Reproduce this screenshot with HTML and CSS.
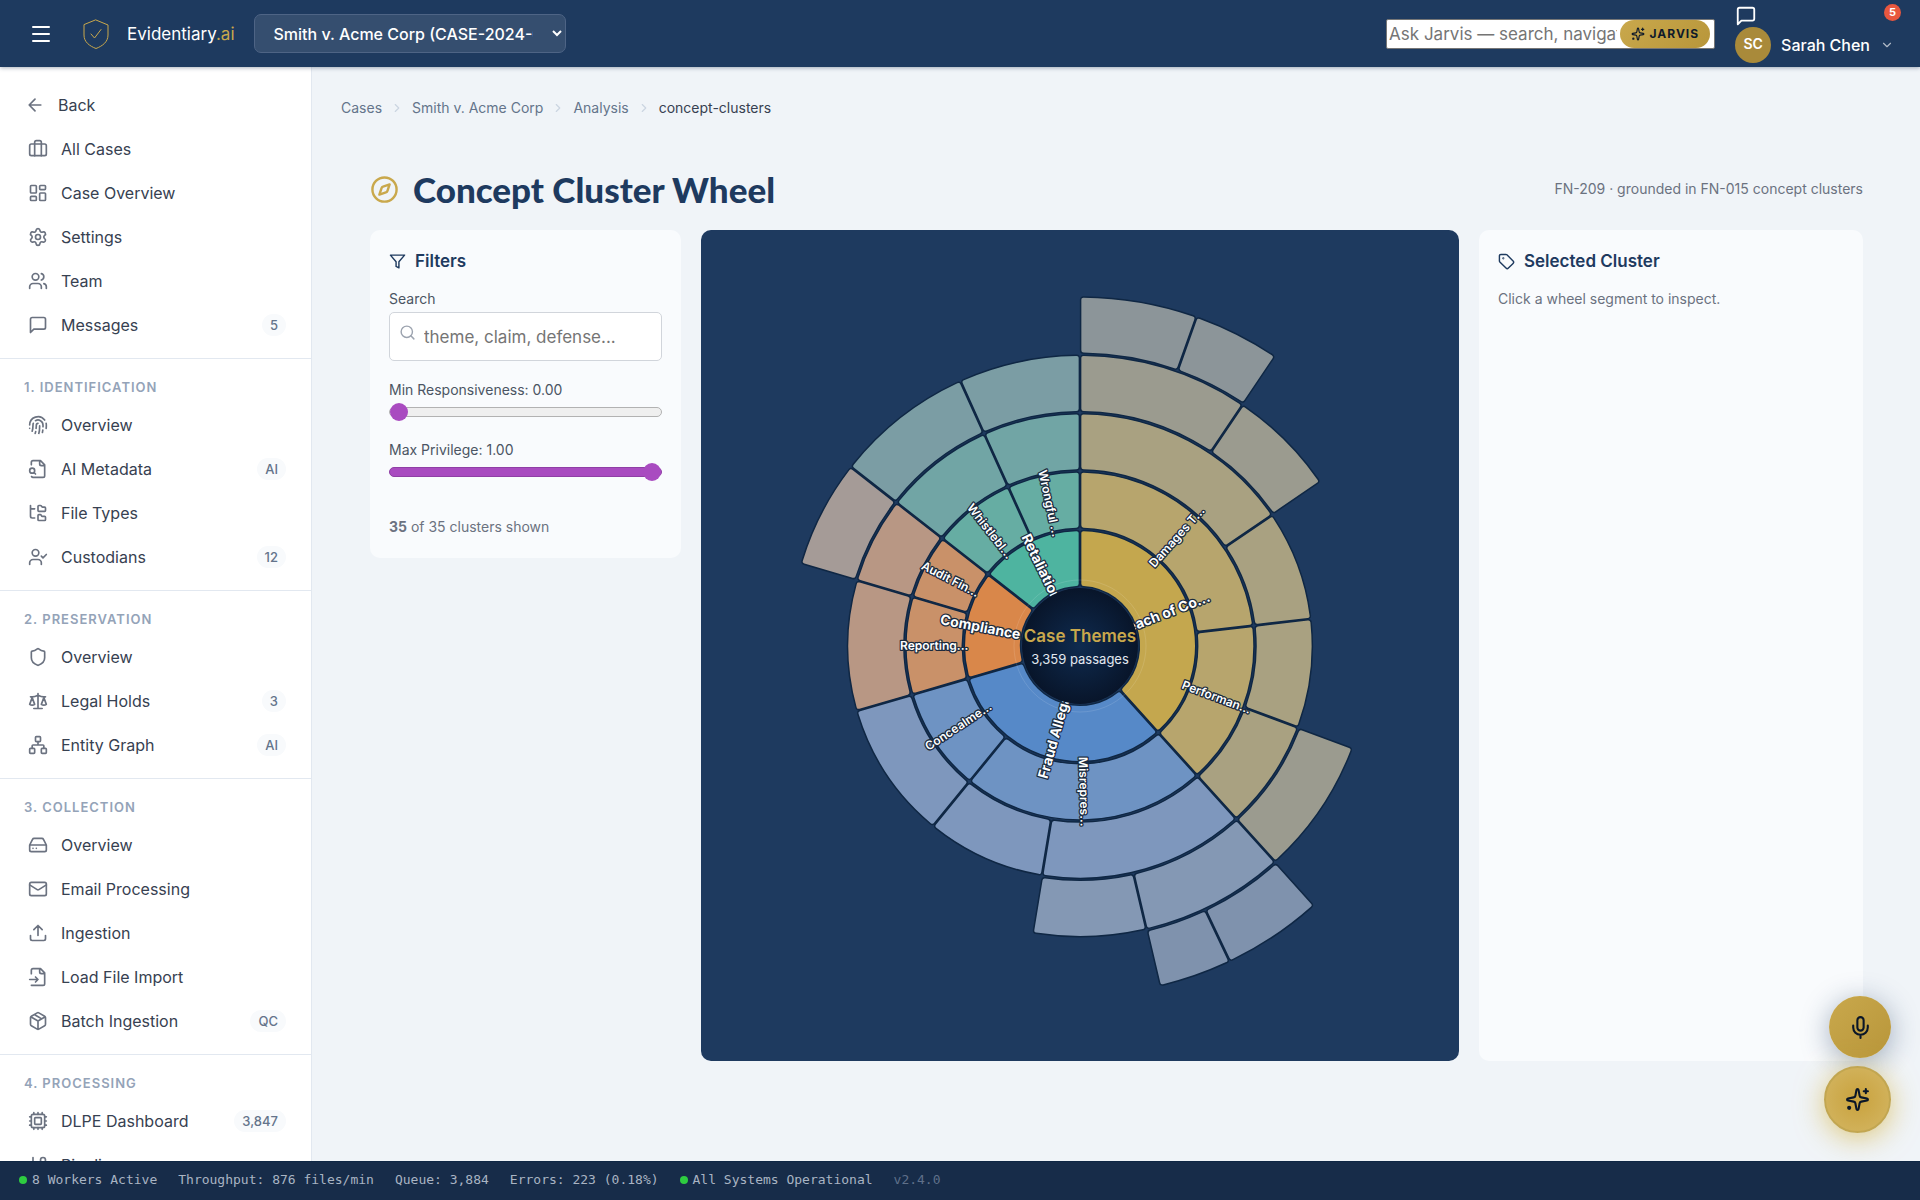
FILE: index.html
```html
<!DOCTYPE html>
<html lang="en">
<head>
<meta charset="utf-8">
<meta name="viewport" content="width=device-width, initial-scale=1">
<title>Concept Cluster Wheel · Evidentiary.ai</title>
<link rel="stylesheet" href="styles.css">
</head>
<body>
<svg class="sprite" aria-hidden="true">
  <symbol id="i-menu" viewBox="0 0 24 24"><path d="M4 5h16M4 12h16M4 19h16"/></symbol>
  <symbol id="i-shield" viewBox="0 0 24 24"><path d="M20 13c0 5-3.500 7.500-7.660 8.950a1 1 0 0 1-.67-.01C7.500 20.500 4 18 4 13V6a1 1 0 0 1 1-1c2 0 4.500-1.200 6.240-2.720a1.170 1.170 0 0 1 1.520 0C14.510 3.810 17 5 19 5a1 1 0 0 1 1 1z"/></symbol>
  <symbol id="i-logo" viewBox="0 0 32 32"><path d="M16 2 28 7v10c0 7-5.500 11-12 13.500C9.500 28 4 24 4 17V7z"/><path d="m11 16 3.500 4L21 11.500"/></symbol>
  <symbol id="i-back" viewBox="0 0 24 24"><path d="m12 19-7-7 7-7M19 12H5"/></symbol>
  <symbol id="i-cases" viewBox="0 0 24 24"><path d="M16 20V4a2 2 0 0 0-2-2h-4a2 2 0 0 0-2 2v16"/><rect width="20" height="14" x="2" y="6" rx="2"/></symbol>
  <symbol id="i-dashboard" viewBox="0 0 24 24"><rect width="7" height="9" x="3" y="3" rx="1"/><rect width="7" height="5" x="14" y="3" rx="1"/><rect width="7" height="9" x="14" y="12" rx="1"/><rect width="7" height="5" x="3" y="16" rx="1"/></symbol>
  <symbol id="i-settings" viewBox="0 0 24 24"><path d="M9.671 4.136a2.340 2.340 0 0 1 4.659 0 2.340 2.340 0 0 0 3.319 1.915 2.340 2.340 0 0 1 2.330 4.033 2.340 2.340 0 0 0 0 3.831 2.340 2.340 0 0 1-2.330 4.033 2.340 2.340 0 0 0-3.319 1.915 2.340 2.340 0 0 1-4.659 0 2.340 2.340 0 0 0-3.320-1.915 2.340 2.340 0 0 1-2.330-4.033 2.340 2.340 0 0 0 0-3.831A2.340 2.340 0 0 1 6.350 6.051a2.340 2.340 0 0 0 3.319-1.915"/><circle cx="12" cy="12" r="3"/></symbol>
  <symbol id="i-users" viewBox="0 0 24 24"><path d="M16 21v-2a4 4 0 0 0-4-4H6a4 4 0 0 0-4 4v2M16 3.128a4 4 0 0 1 0 7.744M22 21v-2a4 4 0 0 0-3-3.870"/><circle cx="9" cy="7" r="4"/></symbol>
  <symbol id="i-message" viewBox="0 0 24 24"><path d="M21 15a2 2 0 0 1-2 2H7l-4 4V5a2 2 0 0 1 2-2h14a2 2 0 0 1 2 2z"/></symbol>
  <symbol id="i-fingerprint" viewBox="0 0 24 24"><path d="M12 10a2 2 0 0 0-2 2c0 1.020-.1 2.510-.26 4M14 13.120c0 2.380 0 6.380-1 8.880M17.290 21.020c.12-.6.430-2.300.5-3.020M2 12a10 10 0 0 1 18-6M2 16h.01M21.800 16c.2-2 .131-5.354 0-6M5 19.500C5.500 18 6 15 6 12a6 6 0 0 1 .34-2M8.650 22c.21-.66.450-1.320.570-2M9 6.800a6 6 0 0 1 9 5.200v2"/></symbol>
  <symbol id="i-filesearch" viewBox="0 0 24 24"><path d="M14 2v4a2 2 0 0 0 2 2h4M4.268 21a2 2 0 0 0 1.727 1H18a2 2 0 0 0 2-2V7l-5-5H6a2 2 0 0 0-2 2v3M9 18l-1.500-1.500"/><circle cx="5" cy="14" r="3"/></symbol>
  <symbol id="i-tree" viewBox="0 0 24 24"><path d="M20 10a1 1 0 0 0 1-1V6a1 1 0 0 0-1-1h-2.500a1 1 0 0 1-.8-.4l-.9-1.200A1 1 0 0 0 15 3h-2a1 1 0 0 0-1 1v5a1 1 0 0 0 1 1ZM20 21a1 1 0 0 0 1-1v-3a1 1 0 0 0-1-1h-2.900a1 1 0 0 1-.88-.55l-.42-.85a1 1 0 0 0-.92-.6H13a1 1 0 0 0-1 1v5a1 1 0 0 0 1 1ZM3 5a2 2 0 0 0 2 2h3M3 3v13a2 2 0 0 0 2 2h3"/></symbol>
  <symbol id="i-usercheck" viewBox="0 0 24 24"><path d="m16 11 2 2 4-4M16 21v-2a4 4 0 0 0-4-4H6a4 4 0 0 0-4 4v2"/><circle cx="9" cy="7" r="4"/></symbol>
  <symbol id="i-scale" viewBox="0 0 24 24"><path d="m16 16 3-8 3 8c-.87.650-1.920 1-3 1s-2.130-.35-3-1ZM2 16l3-8 3 8c-.87.650-1.920 1-3 1s-2.130-.35-3-1ZM7 21h10M12 3v18M3 7h2c2 0 5-1 7-2 2 1 5 2 7 2h2"/></symbol>
  <symbol id="i-network" viewBox="0 0 24 24"><rect x="16" y="16" width="6" height="6" rx="1"/><rect x="2" y="16" width="6" height="6" rx="1"/><rect x="9" y="2" width="6" height="6" rx="1"/><path d="M5 16v-3a1 1 0 0 1 1-1h12a1 1 0 0 1 1 1v3M12 12V8"/></symbol>
  <symbol id="i-drive" viewBox="0 0 24 24"><path d="M22 12H2M5.450 5.110 2 12v6a2 2 0 0 0 2 2h16a2 2 0 0 0 2-2v-6l-3.450-6.890A2 2 0 0 0 16.760 4H7.240a2 2 0 0 0-1.790 1.110zM6 16h.01M10 16h.01"/></symbol>
  <symbol id="i-mail" viewBox="0 0 24 24"><path d="m22 7-8.991 5.727a2 2 0 0 1-2.009 0L2 7"/><rect x="2" y="4" width="20" height="16" rx="2"/></symbol>
  <symbol id="i-upload" viewBox="0 0 24 24"><path d="M12 3v12M17 8l-5-5-5 5M21 15v4a2 2 0 0 1-2 2H5a2 2 0 0 1-2-2v-4"/></symbol>
  <symbol id="i-fileinput" viewBox="0 0 24 24"><path d="M4 22h14a2 2 0 0 0 2-2V7l-5-5H6a2 2 0 0 0-2 2v4M14 2v4a2 2 0 0 0 2 2h4M2 15h10M9 18l3-3-3-3"/></symbol>
  <symbol id="i-package" viewBox="0 0 24 24"><path d="M11 21.730a2 2 0 0 0 2 0l7-4A2 2 0 0 0 21 16V8a2 2 0 0 0-1-1.730l-7-4a2 2 0 0 0-2 0l-7 4A2 2 0 0 0 3 8v8a2 2 0 0 0 1 1.730zM12 22V12M3.290 7 12 12l8.710-5M7.500 4.270l9 5.150"/></symbol>
  <symbol id="i-cpu" viewBox="0 0 24 24"><path d="M12 20v2M12 2v2M17 20v2M17 2v2M2 12h2M2 17h2M2 7h2M20 12h2M20 17h2M20 7h2M7 20v2M7 2v2"/><rect x="4" y="4" width="16" height="16" rx="2"/><rect x="8" y="8" width="8" height="8" rx="1"/></symbol>
  <symbol id="i-branch" viewBox="0 0 24 24"><path d="M6 3v12M18 9a9 9 0 0 1-9 9"/><circle cx="18" cy="6" r="3"/><circle cx="6" cy="18" r="3"/></symbol>
  <symbol id="i-chevron-down" viewBox="0 0 24 24"><path d="m6 9 6 6 6-6"/></symbol>
  <symbol id="i-chevron-right" viewBox="0 0 24 24"><path d="m9 18 6-6-6-6"/></symbol>
  <symbol id="i-compass" viewBox="0 0 24 24"><path d="m16.240 7.760-1.804 5.411a2 2 0 0 1-1.265 1.265L7.760 16.240l1.804-5.411a2 2 0 0 1 1.265-1.265z"/><circle cx="12" cy="12" r="10"/></symbol>
  <symbol id="i-filter" viewBox="0 0 24 24"><path d="M22 3H2l8 9.460V19l4 2v-8.540z"/></symbol>
  <symbol id="i-search" viewBox="0 0 24 24"><circle cx="11" cy="11" r="8"/><path d="m21 21-4.300-4.300"/></symbol>
  <symbol id="i-tag" viewBox="0 0 24 24"><path d="M12.586 2.586A2 2 0 0 0 11.172 2H4a2 2 0 0 0-2 2v7.172a2 2 0 0 0 .586 1.414l8.704 8.704a2.426 2.426 0 0 0 3.420 0l6.580-6.580a2.426 2.426 0 0 0 0-3.420z"/><circle cx="7.500" cy="7.500" r=".5"/></symbol>
  <symbol id="i-sparkles" viewBox="0 0 24 24"><path d="M11.017 2.814a1 1 0 0 1 1.966 0l1.051 5.558a2 2 0 0 0 1.594 1.594l5.558 1.051a1 1 0 0 1 0 1.966l-5.558 1.051a2 2 0 0 0-1.594 1.594l-1.051 5.558a1 1 0 0 1-1.966 0l-1.051-5.558a2 2 0 0 0-1.594-1.594l-5.558-1.051a1 1 0 0 1 0-1.966l5.558-1.051a2 2 0 0 0 1.594-1.594zM20 2v4M22 4h-4"/><circle cx="4" cy="20" r="1"/></symbol>
  <symbol id="i-mic" viewBox="0 0 24 24"><path d="M12 19v3M19 10v2a7 7 0 0 1-14 0v-2"/><rect x="9" y="2" width="6" height="13" rx="3"/></symbol>
</svg>

<header class="topbar">
  <button class="icon-btn" aria-label="Toggle menu"><svg class="icon icon-lg"><use href="#i-menu"/></svg></button>
  <a class="brand" href="#"><svg class="logo"><use href="#i-logo"/></svg><span>Evidentiary<span class="brand-tld">.ai</span></span></a>
  <select class="case-select" aria-label="Case"><option>Smith v. Acme Corp (CASE-2024-001)</option></select>
  <form class="ask">
    <input type="text" aria-label="Ask Jarvis" placeholder="Ask Jarvis — search, navigate, analyze">
    <button type="button" class="jarvis"><svg class="icon icon-xs"><use href="#i-sparkles"/></svg>JARVIS</button>
  </form>
  <div class="account">
    <button class="icon-btn" aria-label="Messages"><svg class="icon icon-md"><use href="#i-message"/></svg></button>
    <span class="alert-count">5</span>
    <button class="user"><span class="avatar">SC</span><span>Sarah Chen</span><svg class="icon icon-xs"><use href="#i-chevron-down"/></svg></button>
  </div>
</header>

<div class="workspace">
  <nav class="sidebar" aria-label="Case navigation">
    <div class="nav-group">
      <a class="nav-item nav-back" href="#"><svg class="icon"><use href="#i-back"/></svg>Back</a>
      <a class="nav-item" href="#"><svg class="icon"><use href="#i-cases"/></svg>All Cases</a>
      <a class="nav-item" href="#"><svg class="icon"><use href="#i-dashboard"/></svg>Case Overview</a>
      <a class="nav-item" href="#"><svg class="icon"><use href="#i-settings"/></svg>Settings</a>
      <a class="nav-item" href="#"><svg class="icon"><use href="#i-users"/></svg>Team</a>
      <a class="nav-item" href="#"><svg class="icon"><use href="#i-message"/></svg>Messages<span class="badge">5</span></a>
    </div>
    <div class="nav-group">
      <h2 class="nav-title">1. IDENTIFICATION</h2>
      <a class="nav-item" href="#"><svg class="icon"><use href="#i-fingerprint"/></svg>Overview</a>
      <a class="nav-item" href="#"><svg class="icon"><use href="#i-filesearch"/></svg>AI Metadata<span class="badge">AI</span></a>
      <a class="nav-item" href="#"><svg class="icon"><use href="#i-tree"/></svg>File Types</a>
      <a class="nav-item" href="#"><svg class="icon"><use href="#i-usercheck"/></svg>Custodians<span class="badge">12</span></a>
    </div>
    <div class="nav-group">
      <h2 class="nav-title">2. PRESERVATION</h2>
      <a class="nav-item" href="#"><svg class="icon"><use href="#i-shield"/></svg>Overview</a>
      <a class="nav-item" href="#"><svg class="icon"><use href="#i-scale"/></svg>Legal Holds<span class="badge">3</span></a>
      <a class="nav-item" href="#"><svg class="icon"><use href="#i-network"/></svg>Entity Graph<span class="badge">AI</span></a>
    </div>
    <div class="nav-group">
      <h2 class="nav-title">3. COLLECTION</h2>
      <a class="nav-item" href="#"><svg class="icon"><use href="#i-drive"/></svg>Overview</a>
      <a class="nav-item" href="#"><svg class="icon"><use href="#i-mail"/></svg>Email Processing</a>
      <a class="nav-item" href="#"><svg class="icon"><use href="#i-upload"/></svg>Ingestion</a>
      <a class="nav-item" href="#"><svg class="icon"><use href="#i-fileinput"/></svg>Load File Import</a>
      <a class="nav-item" href="#"><svg class="icon"><use href="#i-package"/></svg>Batch Ingestion<span class="badge">QC</span></a>
    </div>
    <div class="nav-group">
      <h2 class="nav-title">4. PROCESSING</h2>
      <a class="nav-item" href="#"><svg class="icon"><use href="#i-cpu"/></svg>DLPE Dashboard<span class="badge">3,847</span></a>
      <a class="nav-item" href="#"><svg class="icon"><use href="#i-branch"/></svg>Pipeline</a>
    </div>
  </nav>

  <main class="main">
    <nav class="crumbs" aria-label="Breadcrumb">
      <a href="#">Cases</a><svg class="icon icon-xs"><use href="#i-chevron-right"/></svg>
      <a href="#">Smith v. Acme Corp</a><svg class="icon icon-xs"><use href="#i-chevron-right"/></svg>
      <a href="#">Analysis</a><svg class="icon icon-xs"><use href="#i-chevron-right"/></svg>
      <span class="current">concept-clusters</span>
    </nav>
    <div class="page">
      <div class="page-head">
        <svg class="icon compass"><use href="#i-compass"/></svg>
        <h1>Concept Cluster Wheel</h1>
        <p class="note">FN-209 · grounded in FN-015 concept clusters</p>
      </div>
      <div class="columns">
        <section class="card filters">
          <h2 class="card-title"><svg class="icon icon-sm"><use href="#i-filter"/></svg>Filters</h2>
          <div class="field">
            <label for="q">Search</label>
            <div class="search"><svg class="icon icon-sm"><use href="#i-search"/></svg><input id="q" type="text" placeholder="theme, claim, defense..."></div>
          </div>
          <div class="field">
            <label for="resp">Min Responsiveness: 0.00</label>
            <input class="slider" id="resp" type="range" min="0" max="1" step="0.05" value="0">
          </div>
          <div class="field">
            <label for="priv">Max Privilege: 1.00</label>
            <input class="slider slider-full" id="priv" type="range" min="0" max="1" step="0.05" value="1">
          </div>
          <p class="shown"><strong>35</strong> of 35 clusters shown</p>
        </section>
        <section class="wheel-panel" aria-label="Concept cluster wheel">
          <svg class="wheel" viewBox="-379 -416 758 831">
            <defs><radialGradient id="hub"><stop offset="0" stop-color="#0f2b4f"/><stop offset="1" stop-color="#08152a"/></radialGradient></defs>
            <g id="segments"></g>
            <circle class="hub-ring" r="66"/>
            <g id="labels"></g>
            <circle class="hub" r="58"/>
            <text class="hub-title" y="-4">Case Themes</text>
            <text class="hub-sub" y="18">3,359 passages</text>
          </svg>
        </section>
        <section class="card selected">
          <h2 class="card-title"><svg class="icon icon-sm"><use href="#i-tag"/></svg>Selected Cluster</h2>
          <p class="hint">Click a wheel segment to inspect.</p>
        </section>
      </div>
    </div>
  </main>
</div>

<div class="fabs">
  <button class="fab" aria-label="Voice input"><svg class="icon"><use href="#i-mic"/></svg></button>
  <button class="fab fab-assist" aria-label="Open assistant"><svg class="icon"><use href="#i-sparkles"/></svg></button>
</div>

<footer class="statusbar">
  <span><i class="dot"></i>8 Workers Active</span>
  <span>Throughput: 876 files/min</span>
  <span>Queue: 3,884</span>
  <span>Errors: 223 (0.18%)</span>
  <span><i class="dot"></i>All Systems Operational</span>
  <span class="version">v2.4.0</span>
</footer>
<script src="wheel.js"></script>
</body>
</html>
```
FILE: wheel.js
```js
// Sunburst of case themes: [theme, ring, start angle, end angle, label], angles clockwise from noon.
const RING = 350 / 6;
const COLORS = {
  gold: ['#c4a74e', '#b7a56d', '#a9a181', '#9b9b8f', '#8c9599'],
  blue: ['#5689c8', '#6e93c3', '#7e97bd', '#8498b4', '#7f92ad'],
  orange: ['#d9874a', '#c99169', '#b89784', '#a59b97'],
  teal: ['#4eb4a0', '#66ada3', '#71a5a5', '#7b9da4']
};
const SEGMENTS = [
  ['gold', 1, 0, 137.9, 'Breach of Co...'],
  ['blue', 1, 137.9, 253.8, 'Fraud Allega...'],
  ['orange', 1, 253.8, 308, 'Compliance A...'],
  ['teal', 1, 308, 360, 'Retaliation'],
  ['gold', 2, 0, 83.3, 'Damages T...'],
  ['gold', 2, 83.3, 137.9, 'Performan...'],
  ['blue', 2, 137.9, 219.2, 'Misrepres...'],
  ['blue', 2, 219.2, 253.8, 'Concealme...'],
  ['orange', 2, 253.8, 286.4, 'Reporting...'],
  ['orange', 2, 286.4, 308, 'Audit Fin...'],
  ['teal', 2, 308, 335.7, 'Whistlebl...'],
  ['teal', 2, 335.7, 360, 'Wrongful ...'],
  ['gold', 3, 0, 55.7],
  ['gold', 3, 55.7, 83.3],
  ['gold', 3, 83.3, 110.5],
  ['gold', 3, 110.5, 137.9],
  ['blue', 3, 137.9, 189.4],
  ['blue', 3, 189.4, 219.2],
  ['blue', 3, 219.2, 253.8],
  ['orange', 3, 253.8, 286.4],
  ['orange', 3, 286.4, 308],
  ['teal', 3, 308, 335.7],
  ['teal', 3, 335.7, 360],
  ['gold', 4, 0, 34],
  ['gold', 4, 34, 55.7],
  ['gold', 4, 110.5, 137.9],
  ['blue', 4, 137.9, 166.8],
  ['blue', 4, 166.8, 189.4],
  ['orange', 4, 286.4, 308],
  ['teal', 4, 308, 335.7],
  ['teal', 4, 335.7, 360],
  ['gold', 5, 0, 19.5],
  ['gold', 5, 19.5, 34],
  ['blue', 5, 137.9, 154.6],
  ['blue', 5, 154.6, 166.8]
];
const NS = 'http://www.w3.org/2000/svg';

// Point at radius r and angle a (degrees), moved sideways by s pixels.
function at(r, a, s) {
  const t = a * Math.PI / 180 + (s || 0) / r;
  return (r * Math.sin(t)).toFixed(2) + ' ' + (-r * Math.cos(t)).toFixed(2);
}

// Ring sector with a small gap on every side and rounded corners.
function sector(ring, a0, a1) {
  const g = 0.6, c = 3;
  const r0 = ring * RING + 1, r1 = (ring + 1) * RING - 1;
  const big = a1 - a0 > 180 ? 1 : 0;
  return `M${at(r0 + c, a0, g)}L${at(r1 - c, a0, g)}Q${at(r1, a0, g)} ${at(r1, a0, g + c)}` +
    `A${r1} ${r1} 0 ${big} 1 ${at(r1, a1, -g - c)}Q${at(r1, a1, -g)} ${at(r1 - c, a1, -g)}` +
    `L${at(r0 + c, a1, -g)}Q${at(r0, a1, -g)} ${at(r0, a1, -g - c)}` +
    `A${r0} ${r0} 0 ${big} 0 ${at(r0, a0, g + c)}Q${at(r0, a0, g)} ${at(r0 + c, a0, g)}Z`;
}

for (const [theme, ring, a0, a1, label] of SEGMENTS) {
  const path = document.createElementNS(NS, 'path');
  path.setAttribute('class', 'segment');
  path.setAttribute('d', sector(ring, a0, a1));
  path.setAttribute('fill', COLORS[theme][ring - 1]);
  document.getElementById('segments').append(path);
  if (label) {
    const mid = (a0 + a1) / 2;
    const text = document.createElementNS(NS, 'text');
    text.setAttribute('class', ring === 1 ? 'label label-theme' : 'label');
    text.setAttribute('transform', `translate(${at((ring + 0.5) * RING, mid)}) rotate(${mid < 180 ? mid - 90 : mid + 90})`);
    text.setAttribute('dy', ring === 1 ? '5' : '4');
    text.textContent = label;
    document.getElementById('labels').append(text);
  }
}
```
FILE: styles.css
```css
:root {
  --navy: #1e3a5f;
  --gold: #c9a84c;
  --line: #e2e8f0;
  --ink: #374151;
  --muted: #6b7280;
}
* { box-sizing: border-box; }
body {
  margin: 0;
  height: 100vh;
  display: flex;
  flex-direction: column;
  font: 16px/24px Inter, "Liberation Sans", sans-serif;
  color: var(--ink);
  background: #f0f4f8;
}
h1, h2, p { margin: 0; }
a { color: inherit; text-decoration: none; }
button, input, select { font: inherit; }
button { border: 0; background: none; padding: 0; color: inherit; }
.sprite { position: absolute; width: 0; height: 0; }
.icon, .logo {
  width: 20px;
  height: 20px;
  flex: none;
  display: block;
  fill: none;
  stroke: currentColor;
  stroke-width: 2;
  stroke-linecap: round;
  stroke-linejoin: round;
}
.icon-xs { width: 14px; height: 14px; }
.icon-sm { width: 17px; height: 17px; }
.icon-md { width: 22px; height: 22px; }
.icon-lg { width: 24px; height: 24px; }

/* Top bar */
.topbar {
  flex: none;
  height: 67px;
  display: flex;
  align-items: center;
  padding: 0 21px 0 29px;
  color: #fff;
  background: var(--navy);
  box-shadow: 0 1px 4px rgba(15, 35, 65, .35);
  z-index: 2;
}
.brand {
  display: flex;
  align-items: center;
  gap: 15px;
  margin-left: 27px;
  font-size: 17px;
}
.logo { width: 32px; height: 32px; stroke: var(--gold); stroke-width: 1; }
.brand-tld { color: var(--gold); }
.case-select {
  width: 312px;
  height: 39px;
  margin-left: 19px;
  padding: 0 16px 0 15px;
  border: 1px solid #4e6485;
  border-radius: 7px;
  font-weight: 500;
  color: #fff;
  background: #354e6f;
}
.ask {
  display: flex;
  width: 329px;
  height: 30px;
  margin-left: auto;
  padding-right: 4px;
  border: 1px solid #767676;
  border-radius: 2px;
  background: #fff;
}
.ask input { flex: 1; min-width: 0; border: 0; padding: 0 0 0 2px; background: none; font-size: 17px; }
input::placeholder { color: #757575; opacity: 1; }
.jarvis {
  display: flex;
  align-items: center;
  gap: 5px;
  margin-left: 3px;
  padding: 0 11px;
  border-radius: 15px;
  font-size: 12px;
  font-weight: 700;
  letter-spacing: 1px;
  color: #0f1a2a;
  background: linear-gradient(135deg, #c9a84c, #b8963a);
}
.account {
  position: relative;
  display: flex;
  flex-direction: column;
  align-items: flex-start;
  margin-left: 20px;
}
.alert-count {
  position: absolute;
  top: -1px;
  right: -2px;
  width: 17px;
  height: 17px;
  border-radius: 50%;
  font-size: 11px;
  line-height: 17px;
  font-weight: 700;
  text-align: center;
  background: #e8573f;
}
.user { display: flex; align-items: center; gap: 10px; padding-right: 5px; font-weight: 500; }
.user .icon { opacity: .65; }
.avatar {
  width: 36px;
  height: 36px;
  border-radius: 50%;
  font-size: 14px;
  line-height: 34px;
  font-weight: 600;
  text-align: center;
  background: #a98a3a;
}

/* Layout */
.workspace { flex: 1; min-height: 0; display: flex; }
.sidebar {
  flex: none;
  width: 312px;
  padding-top: 16px;
  overflow: hidden;
  border-right: 1px solid var(--line);
  background: #fff;
}
.nav-group { padding: 0 12px 11px; }
.nav-group + .nav-group { padding-top: 20px; border-top: 1px solid var(--line); }
.nav-title {
  padding-left: 12px;
  margin-bottom: 8px;
  font-size: 13px;
  line-height: 16px;
  font-weight: 600;
  letter-spacing: 1px;
  color: #94a3b8;
}
.nav-item {
  display: flex;
  align-items: center;
  gap: 13px;
  height: 44px;
  padding: 0 13px 0 16px;
}
.nav-item .icon { color: #6b7280; }
.nav-back { padding-left: 13px; }
.badge {
  margin-left: auto;
  padding: 0 8px;
  border-radius: 12px;
  font-size: 13px;
  line-height: 22px;
  font-weight: 500;
  color: #64748b;
  background: #f8fafc;
}
.main { flex: 1; min-width: 0; padding: 29px; }
.crumbs {
  display: flex;
  align-items: center;
  gap: 8px;
  font-size: 14px;
  color: #64748b;
}
.crumbs .icon { color: #cbd5e1; }
.crumbs .current { color: var(--ink); }
.page { padding: 48px 28px 0 29px; }
.page-head { display: flex; align-items: center; gap: 14px; height: 42px; margin-bottom: 20px; }
.compass { width: 29px; height: 29px; color: var(--gold); }
h1 {
  font: 900 35px/42px Lato, Inter, sans-serif;
  color: var(--navy);
}
.note { margin-left: auto; font-size: 14px; color: var(--muted); }
.columns { display: grid; grid-template-columns: 311px minmax(0, 1fr) 384px; gap: 20px; }
.card { padding: 19px; border-radius: 10px; background: #f9fbfd; }
.card-title {
  display: flex;
  align-items: center;
  gap: 9px;
  margin-bottom: 14px;
  font-size: 17px;
  font-weight: 600;
  color: var(--navy);
}
.filters { align-self: start; }
.field { margin-bottom: 17px; }
.field label { display: block; font-size: 14px; color: #4b5563; }
.search {
  display: flex;
  gap: 8px;
  height: 49px;
  margin: 1px 0 16px;
  padding: 0 9px;
  border: 1px solid #d1d5db;
  border-radius: 5px;
  background: #fff;
}
.search .icon { margin-top: 11px; color: #9ca3af; }
.search input { flex: 1; min-width: 0; border: 0; padding: 0; background: none; font-size: 17px; }
.slider {
  appearance: none;
  display: block;
  width: 100%;
  height: 18px;
  margin: 1px 0 0;
  background: none;
}
.slider::-webkit-slider-runnable-track {
  height: 10px;
  border: 1px solid #b2b2b2;
  border-radius: 5px;
  background: #efefef;
}
.slider-full::-webkit-slider-runnable-track { border-color: #8f3fa5; background: #a94bc0; }
.slider::-webkit-slider-thumb {
  appearance: none;
  width: 18px;
  height: 18px;
  margin-top: -5px;
  border-radius: 50%;
  background: #a94bc0;
}
.shown { margin-top: 34px; font-size: 14px; color: var(--muted); }
.hint { font-size: 14px; color: var(--muted); }

/* Wheel */
.wheel-panel { border-radius: 10px; background: var(--navy); }
.wheel { display: block; width: 100%; height: auto; }
.segment { stroke: #0f2744; stroke-width: 1.5; }
.label {
  font-size: 12px;
  font-weight: 600;
  text-anchor: middle;
  fill: #fff;
  stroke: #1b2a3d;
  stroke-width: 2.5;
  stroke-linejoin: round;
  paint-order: stroke;
}
.label-theme { font-size: 14px; font-weight: 700; }
.hub { fill: url(#hub); }
.hub-ring { fill: none; stroke: #fff; stroke-opacity: .12; }
.hub-title, .hub-sub { text-anchor: middle; }
.hub-title { font-size: 17px; font-weight: 600; fill: var(--gold); }
.hub-sub { font-size: 13px; fill: #e2e8f0; }

/* Floating actions */
.fabs {
  position: fixed;
  right: 29px;
  bottom: 67px;
  display: flex;
  flex-direction: column;
  align-items: flex-end;
  gap: 8px;
}
.fab {
  display: grid;
  place-items: center;
  width: 62px;
  height: 62px;
  border-radius: 50%;
  color: #0a1628;
  background: linear-gradient(135deg, #c9a84c, #b8963a);
  box-shadow: 0 5px 29px rgba(30, 58, 95, .4);
}
.fab .icon { width: 25px; height: 25px; }
.fab-assist {
  width: 67px;
  height: 67px;
  border: 2px solid #c2a650;
  background: radial-gradient(circle, #c9a23d, #d4b765);
  box-shadow: 0 5px 29px rgba(212, 175, 55, .65);
}

/* Status bar */
.statusbar {
  flex: none;
  height: 39px;
  display: flex;
  align-items: center;
  gap: 21px;
  padding: 0 19px 2px;
  border-top: 1px solid #0f2744;
  font: 13px/20px "DejaVu Sans Mono", "Liberation Mono", monospace;
  color: #a9b4c3;
  background: #172c49;
  z-index: 2;
}
.statusbar span { display: flex; align-items: center; gap: 5px; }
.dot { width: 8px; height: 8px; border-radius: 50%; background: #2ecc40; }
.statusbar .version { color: #5f7089; }
```
